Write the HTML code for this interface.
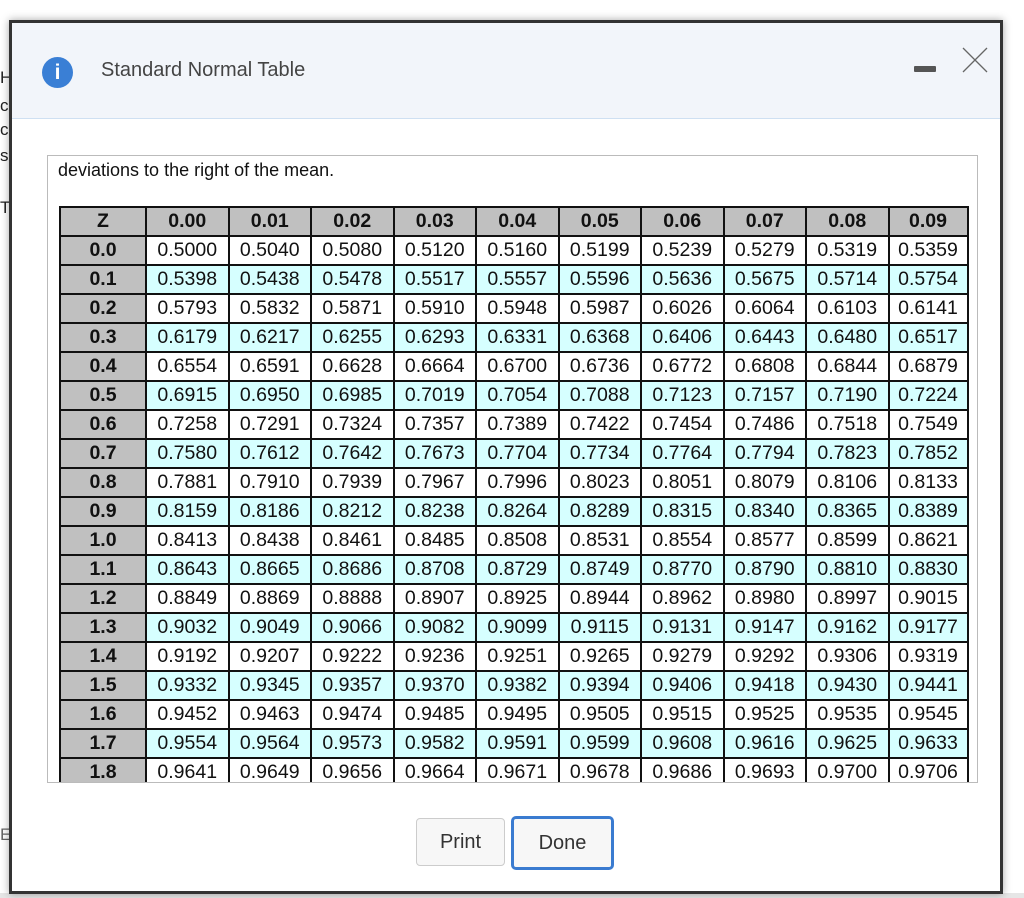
<!DOCTYPE html>
<html><head><meta charset="utf-8"><style>
body{margin:0;width:1024px;height:898px;background:#fff;position:relative;overflow:hidden;font-family:"Liberation Sans",sans-serif}
.bg{position:absolute;left:0;font-size:17px;color:#222}
.modal{position:absolute;left:9px;top:20px;width:988px;height:868px;border:3px solid #333;background:#fff;box-shadow:0 0 8px rgba(0,0,0,.35)}
.hdr{position:absolute;left:0;top:0;width:988px;height:95px;background:#f2f5fa;border-bottom:1px solid #cfe0f2}
.icon{position:absolute;left:30px;top:34px;width:31px;height:31px;border-radius:50%;background:#3a7fd5;color:#fff;font:bold 21px/31px "Liberation Sans",sans-serif;text-align:center}
.title{position:absolute;left:89px;top:36px;font-size:20px;color:#444}
.min{position:absolute;left:902px;top:43px;width:22px;height:6px;background:#555;border-radius:1px}
.box{position:absolute;left:35px;top:132px;width:929px;height:626px;border:1px solid #bbb;overflow:hidden}
.dev{position:absolute;left:10px;top:4px;font-size:18px;color:#111}
table{position:absolute;left:11px;top:50px;border-collapse:collapse;table-layout:fixed;font-size:19.5px}
td{border:2px solid #111;height:27px;padding:0;text-align:center;color:#111;line-height:27px;white-space:nowrap}
td:first-child{background:#c0c0c0;font-weight:bold;width:84px}
tr.h td{background:#c0c0c0;font-weight:bold}
tr.c td{background:#d6ffff}
tr.c td:first-child{background:#c0c0c0}
.btn{position:absolute;font-size:20px;color:#333;text-align:center;background:#f7f7f7}
</style></head><body>
<div class="bg" style="top:68px">H</div><div class="bg" style="top:96px">c</div><div class="bg" style="top:120px">c</div><div class="bg" style="top:146px">s</div><div class="bg" style="top:198px">T</div>
<div class="bg" style="top:825px;color:#666">E</div>
<div style="position:absolute;left:0;top:893px;width:1024px;height:5px;background:#e6e6e6"></div>
<div class="modal">
<div class="hdr"><div class="icon">i</div><div class="title">Standard Normal Table</div><div class="min"></div>
<svg style="position:absolute;left:950px;top:24px" width="26" height="26"><path d="M1 1L25 25M25 1L1 25" stroke="#666" stroke-width="1.3"/></svg></div>
<div class="box"><div class="dev">deviations to the right of the mean.</div>
<table>
<colgroup><col style="width:86px"><col span="9" style="width:82.5px"><col style="width:79px"></colgroup>
<tr class="h"><td>Z</td><td>0.00</td><td>0.01</td><td>0.02</td><td>0.03</td><td>0.04</td><td>0.05</td><td>0.06</td><td>0.07</td><td>0.08</td><td>0.09</td></tr>
<tr><td>0.0</td><td>0.5000</td><td>0.5040</td><td>0.5080</td><td>0.5120</td><td>0.5160</td><td>0.5199</td><td>0.5239</td><td>0.5279</td><td>0.5319</td><td>0.5359</td></tr>
<tr class="c"><td>0.1</td><td>0.5398</td><td>0.5438</td><td>0.5478</td><td>0.5517</td><td>0.5557</td><td>0.5596</td><td>0.5636</td><td>0.5675</td><td>0.5714</td><td>0.5754</td></tr>
<tr><td>0.2</td><td>0.5793</td><td>0.5832</td><td>0.5871</td><td>0.5910</td><td>0.5948</td><td>0.5987</td><td>0.6026</td><td>0.6064</td><td>0.6103</td><td>0.6141</td></tr>
<tr class="c"><td>0.3</td><td>0.6179</td><td>0.6217</td><td>0.6255</td><td>0.6293</td><td>0.6331</td><td>0.6368</td><td>0.6406</td><td>0.6443</td><td>0.6480</td><td>0.6517</td></tr>
<tr><td>0.4</td><td>0.6554</td><td>0.6591</td><td>0.6628</td><td>0.6664</td><td>0.6700</td><td>0.6736</td><td>0.6772</td><td>0.6808</td><td>0.6844</td><td>0.6879</td></tr>
<tr class="c"><td>0.5</td><td>0.6915</td><td>0.6950</td><td>0.6985</td><td>0.7019</td><td>0.7054</td><td>0.7088</td><td>0.7123</td><td>0.7157</td><td>0.7190</td><td>0.7224</td></tr>
<tr><td>0.6</td><td>0.7258</td><td>0.7291</td><td>0.7324</td><td>0.7357</td><td>0.7389</td><td>0.7422</td><td>0.7454</td><td>0.7486</td><td>0.7518</td><td>0.7549</td></tr>
<tr class="c"><td>0.7</td><td>0.7580</td><td>0.7612</td><td>0.7642</td><td>0.7673</td><td>0.7704</td><td>0.7734</td><td>0.7764</td><td>0.7794</td><td>0.7823</td><td>0.7852</td></tr>
<tr><td>0.8</td><td>0.7881</td><td>0.7910</td><td>0.7939</td><td>0.7967</td><td>0.7996</td><td>0.8023</td><td>0.8051</td><td>0.8079</td><td>0.8106</td><td>0.8133</td></tr>
<tr class="c"><td>0.9</td><td>0.8159</td><td>0.8186</td><td>0.8212</td><td>0.8238</td><td>0.8264</td><td>0.8289</td><td>0.8315</td><td>0.8340</td><td>0.8365</td><td>0.8389</td></tr>
<tr><td>1.0</td><td>0.8413</td><td>0.8438</td><td>0.8461</td><td>0.8485</td><td>0.8508</td><td>0.8531</td><td>0.8554</td><td>0.8577</td><td>0.8599</td><td>0.8621</td></tr>
<tr class="c"><td>1.1</td><td>0.8643</td><td>0.8665</td><td>0.8686</td><td>0.8708</td><td>0.8729</td><td>0.8749</td><td>0.8770</td><td>0.8790</td><td>0.8810</td><td>0.8830</td></tr>
<tr><td>1.2</td><td>0.8849</td><td>0.8869</td><td>0.8888</td><td>0.8907</td><td>0.8925</td><td>0.8944</td><td>0.8962</td><td>0.8980</td><td>0.8997</td><td>0.9015</td></tr>
<tr class="c"><td>1.3</td><td>0.9032</td><td>0.9049</td><td>0.9066</td><td>0.9082</td><td>0.9099</td><td>0.9115</td><td>0.9131</td><td>0.9147</td><td>0.9162</td><td>0.9177</td></tr>
<tr><td>1.4</td><td>0.9192</td><td>0.9207</td><td>0.9222</td><td>0.9236</td><td>0.9251</td><td>0.9265</td><td>0.9279</td><td>0.9292</td><td>0.9306</td><td>0.9319</td></tr>
<tr class="c"><td>1.5</td><td>0.9332</td><td>0.9345</td><td>0.9357</td><td>0.9370</td><td>0.9382</td><td>0.9394</td><td>0.9406</td><td>0.9418</td><td>0.9430</td><td>0.9441</td></tr>
<tr><td>1.6</td><td>0.9452</td><td>0.9463</td><td>0.9474</td><td>0.9485</td><td>0.9495</td><td>0.9505</td><td>0.9515</td><td>0.9525</td><td>0.9535</td><td>0.9545</td></tr>
<tr class="c"><td>1.7</td><td>0.9554</td><td>0.9564</td><td>0.9573</td><td>0.9582</td><td>0.9591</td><td>0.9599</td><td>0.9608</td><td>0.9616</td><td>0.9625</td><td>0.9633</td></tr>
<tr><td>1.8</td><td>0.9641</td><td>0.9649</td><td>0.9656</td><td>0.9664</td><td>0.9671</td><td>0.9678</td><td>0.9686</td><td>0.9693</td><td>0.9700</td><td>0.9706</td></tr>
</table></div>
<div class="btn" style="left:404px;top:795px;width:87px;height:46px;line-height:46px;border:1px solid #ccc;border-radius:4px">Print</div>
<div class="btn" style="left:499px;top:793px;width:97px;height:48px;line-height:48px;border:3px solid #3a7bd0;border-radius:5px">Done</div>
</div>
</body></html>
